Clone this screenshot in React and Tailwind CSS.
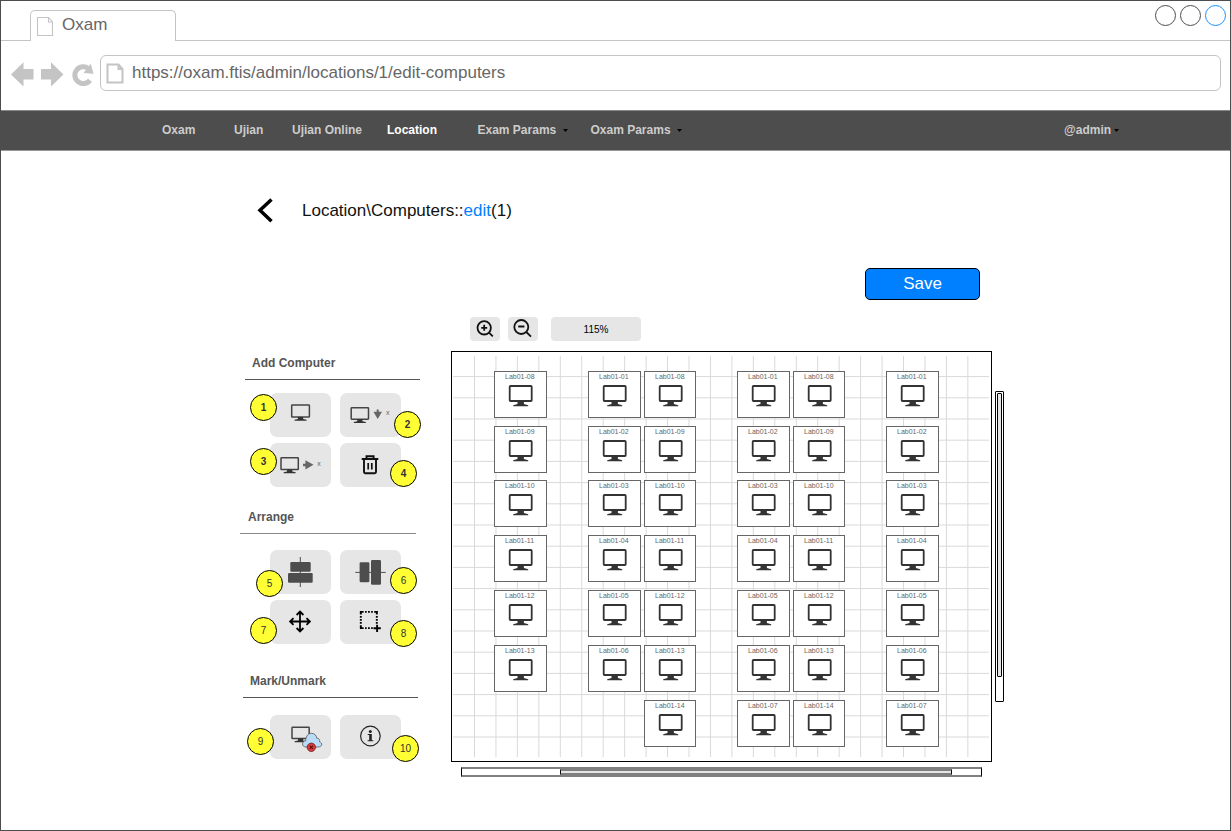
import React from "react";

function FileIcon({ className, strokeWidth }) {
  return (
    <svg className={className} viewBox="0 0 18 21" fill="none" stroke="#c4c4c4" strokeWidth={strokeWidth}>
      <path d="M1.5 1.5H12.5L16.5 6V19.5H1.5Z M12.5 1.5V6H16.5" />
    </svg>
  );
}

function BrowserChrome() {
  return (
    <header>
      <div className="flex h-10 items-end">
        <div className="h-px w-[29px] bg-[#c4c4c4]" />
        <div className="flex h-[31px] w-[146px] items-center rounded-t-[5px] border border-b-0 border-[#c4c4c4] pl-[5px]">
          <FileIcon className="h-[21px] w-[18px]" strokeWidth={1.1} />
          <span className="ml-[8px] text-[17px] leading-none text-[#666] -mt-[3px]">Oxam</span>
        </div>
        <div className="flex h-full flex-1 items-start justify-end gap-[4px] border-b border-[#c4c4c4] pr-1 pt-1">
          <span className="h-[21px] w-[21px] rounded-full border border-[#4d4d4d]" />
          <span className="h-[21px] w-[21px] rounded-full border border-[#4d4d4d]" />
          <span className="h-[21px] w-[21px] rounded-full border border-[#1e90ff]" />
        </div>
      </div>
      <div className="flex h-[69px] pl-2.5 pt-[14px] pr-[9px]">
        <svg className="mt-[7px] h-6 w-[84px] shrink-0" viewBox="0 0 84 24" fill="#c4c4c4">
          <path d="M0 12.5L12.5 .3V7H22.5V17.5H12.5V24.5Z" />
          <path d="M52.5 12.5L40 .3V7H30V17.5H40V24.5Z" />
          <path d="M79 18.2A8.4 8.4 0 1 1 77.5 6.6" fill="none" stroke="#c4c4c4" strokeWidth="5" />
          <path d="M79.7 1.8L82.6 11.8L72.5 11Z" />
        </svg>
        <div className="flex h-9 flex-1 items-center rounded-md border border-[#c4c4c4] pl-[5px] ml-[5px]">
          <FileIcon className="h-[21px] w-[18px]" strokeWidth={2} />
          <span className="-mt-px ml-[8px] text-[17px] leading-none text-[#666]">https://oxam.ftis/admin/locations/1/edit-computers</span>
        </div>
      </div>
    </header>
  );
}

function Caret() {
  return (
    <svg className="mt-0.5 h-[3px] w-[5px]" viewBox="0 0 5 3">
      <path d="M0 0H5L2.5 3Z" fill="#000" />
    </svg>
  );
}

function NavBar() {
  return (
    <nav className="flex h-[41px] items-center border-y border-t-[#888] border-b-[#999] bg-[#4d4d4d] pb-0.5 pl-[161px] text-xs font-bold text-[#ccc]">
      <span className="w-[72px]">Oxam</span>
      <span className="w-[58px]">Ujian</span>
      <span className="w-[95px]">Ujian Online</span>
      <span className="w-[90.5px] text-white">Location</span>
      <span className="flex w-[113px] items-center gap-[7px]">Exam Params <Caret /></span>
      <span className="flex w-[473.5px] items-center gap-[6px]">Oxam Params <Caret /></span>
      <span className="flex items-center gap-[3px]">@admin <Caret /></span>
    </nav>
  );
}

function Screen({ x, y, w = 18.5, h = 12.5 }) {
  const cx = x + w / 2;
  const b = y + h;
  return (
    <g>
      <rect x={x} y={y} width={w} height={h} rx=".6" fill="none" stroke="#444" strokeWidth="1.5" />
      <path
        d={`M${cx - 2.6} ${b}H${cx + 2.6}V${b + 2}L${cx + 6} ${b + 2.8}V${b + 3.7}H${cx - 6}V${b + 2.8}L${cx - 2.6} ${b + 2}Z`}
        fill="#333"
      />
    </g>
  );
}

function Tool({ label, badge, bold, children }) {
  return (
    <button aria-label={label} className="relative h-11 w-[61px] rounded-[7px] bg-[#e6e6e6]">
      <svg className="h-11 w-[61px]" viewBox="0 0 61 44">{children}</svg>
      <span className={`absolute flex h-[27px] w-[27px] items-center justify-center rounded-full border-[1.5px] border-black bg-[#ffff33] text-[10px] leading-none text-[#333] ${bold ? "font-bold" : ""} ${badge.pos}`}>
        {badge.n}
      </span>
    </button>
  );
}

function Section({ title, head, titlePad, line, children }) {
  return (
    <section>
      <div className={`border-b ${line} ${head}`}>
        <h2 className={`text-xs font-bold leading-4 text-[#555] ${titlePad}`}>{title}</h2>
      </div>
      {children}
    </section>
  );
}

const toolGrid = "grid w-[131px] grid-cols-[61px_61px] gap-x-[9px] gap-y-[6px] ml-[30px]";

function Sidebar() {
  return (
    <aside className="w-[211px] shrink-0 pt-[38px]">
      <Section title="Add Computer" head="ml-[5px] h-[25px] w-[175px]" titlePad="pl-[7px]" line="border-[#555]">
        <div className={`mt-[13px] ${toolGrid}`}>
          <Tool label="Add computer" bold badge={{ n: 1, pos: "-left-5 top-[1px]" }}>
            <Screen x={21.7} y={12} w={17.7} h={12} />
          </Tool>
          <Tool label="Add computers down" bold badge={{ n: 2, pos: "left-[54px] top-[18px]" }}>
            <Screen x={11.2} y={14.7} w={17.3} h={11.5} />
            <path d="M36.7 16.5H38.7V18.8H42L37.7 26L33.4 18.8H36.7Z" fill="#666" />
            <text x="46" y="22" fontSize="7" fill="#666">x</text>
          </Tool>
          <Tool label="Add computers right" bold badge={{ n: 3, pos: "-left-5 top-[5px]" }}>
            <Screen x={11} y={14.7} w={17.3} h={11.8} />
            <path d="M33 20.8H35.4V17.3L43.5 21.8L35.4 26.5V23.2H33Z" fill="#666" />
            <text x="47.3" y="23" fontSize="7" fill="#666">x</text>
          </Tool>
          <Tool label="Delete" bold badge={{ n: 4, pos: "left-[50px] top-[17px]" }}>
            <g fill="none" stroke="#111" strokeWidth="1.9">
              <path d="M21.7 16H38.3M26.5 16V13.2H33.6V16M24 16V29Q24 30.2 25.2 30.2H34.8Q36 30.2 36 29V16" />
              <path d="M28.2 20V26.5M31.8 20V26.5" strokeWidth="1.7" />
            </g>
          </Tool>
        </div>
      </Section>
      <Section title="Arrange" head="mt-[22px] h-[25px] w-[176px]" titlePad="pl-[8px]" line="border-[#888]">
        <div className={`mt-[16px] ${toolGrid}`}>
          <Tool label="Center vertically" badge={{ n: 5, pos: "-left-[14px] top-5" }}>
            <path d="M30.3 7V37" stroke="#4d4d4d" />
            <rect x="20.3" y="12" width="20.4" height="9.8" rx="1.3" fill="#4d4d4d" />
            <rect x="18" y="23" width="24.7" height="9.8" rx="1.3" fill="#4d4d4d" />
          </Tool>
          <Tool label="Center horizontally" badge={{ n: 6, pos: "left-[50px] top-[17px]" }}>
            <path d="M15.3 22.4H45.7" stroke="#4d4d4d" />
            <rect x="19.6" y="12.3" width="9.8" height="20" rx="1.3" fill="#4d4d4d" />
            <rect x="31" y="10" width="10" height="24.7" rx="1.3" fill="#4d4d4d" />
          </Tool>
          <Tool label="Move" badge={{ n: 7, pos: "-left-5 top-[17px]" }}>
            <path
              d="M30 11.7V31.3M20.2 21.5H39.8M26.6 15L30 11.6L33.4 15M26.6 28L30 31.4L33.4 28M23.5 18.1L20.1 21.5L23.5 24.9M36.5 18.1L39.9 21.5L36.5 24.9"
              fill="none" stroke="#000" strokeWidth="1.8"
            />
          </Tool>
          <Tool label="Select area" badge={{ n: 8, pos: "left-[50px] top-5" }}>
            <g fill="none" stroke="#000" strokeWidth="1.9">
              <path d="M20 11.9H37.8" strokeDasharray="3.6 1.4 1.7 1.3 1.8 1.3 1.7 1.4 3.6 1" />
              <path d="M20.8 11V29M36.8 11V24" strokeDasharray="3.6 1.4 1.7 1.3 1.8 1.3 1.7 1.4 3.6 1" />
              <path d="M20 28.1H34" strokeDasharray="3.6 1.4 1.7 1.3 1.8 1.3 1.7 1.4" />
              <path d="M37.1 24.7V32M33.5 28.2H40.8" />
            </g>
          </Tool>
        </div>
      </Section>
      <Section title="Mark/Unmark" head="ml-[3px] mt-[29px] h-[25px] w-[175px]" titlePad="pl-[7px]" line="border-[#555]">
        <div className={`mt-[17px] ${toolGrid}`}>
          <Tool label="Mark computer offline" badge={{ n: 9, pos: "-left-[23px] top-[13px]" }}>
            <Screen x={22} y={12.2} w={17.2} h={11.3} />
            <path
              d="M36 32C31.3 32 31.5 26 35.8 25.8C35.5 22.5 37.5 18.3 41.3 18.3C44.7 18.3 46.5 20.6 46.8 23.3C49.7 23 50 26 49.4 26.8C53.3 28 52 32 48.5 32Z"
              fill="#bbdcf7" stroke="#555" strokeWidth=".8"
            />
            <circle cx="41.3" cy="32.3" r="4.2" fill="#e03a3a" stroke="#622" strokeWidth=".8" />
            <path d="M39.7 30.7L42.9 33.9M42.9 30.7L39.7 33.9" stroke="#511" strokeWidth="1.1" />
          </Tool>
          <Tool label="Info" badge={{ n: 10, pos: "left-[52px] top-5" }}>
            <circle cx="30.4" cy="21" r="9.8" fill="none" stroke="#222" strokeWidth="1.2" />
            <circle cx="30.3" cy="16.6" r="1.5" fill="#222" />
            <path d="M27.7 19.1H31.8V25.3H33.3V26.3H27.6V25.3H29.2V20.1H27.7Z" fill="#222" />
          </Tool>
        </div>
      </Section>
    </aside>
  );
}

const COLUMNS = [
  { x: 42, width: 53, from: 8, to: 13 },
  { x: 136, width: 53, from: 1, to: 6 },
  { x: 192, width: 52, from: 8, to: 14 },
  { x: 285, width: 53, from: 1, to: 7 },
  { x: 341, width: 52, from: 8, to: 14 },
  { x: 434, width: 53, from: 1, to: 7 },
];

function ComputerNode({ x, y, width, name }) {
  return (
    <div
      className="absolute flex h-[47px] flex-col items-start border border-[#666] bg-white"
      style={{ left: x, top: y, width }}
    >
      <span className="mt-px ml-[10px] text-[7px] leading-[8px] text-[#666]">{name}</span>
      <svg className="ml-[13px] mt-[4px] h-[22px] w-[25px]" viewBox="0 0 25 22">
        <rect x="1.7" y="1" width="22" height="15" rx=".8" fill="#fff" stroke="#333" strokeWidth="1.8" />
        <path d="M9.5 16H15.9V19L20.2 20.2V21.2H5.2V20.2L9.5 19Z" fill="#333" />
      </svg>
    </div>
  );
}

function Canvas() {
  const verticals = Array.from({ length: 24 }, (_, i) => 22.5 + i * 21.45);
  const horizontals = Array.from({ length: 18 }, (_, i) => 24.6 + i * 21.2);
  return (
    <div className="relative h-[411px] w-[541px] border border-black">
      <svg className="h-full w-full" viewBox="0 0 539 409" stroke="#d9d9d9">
        {verticals.map((x) => <path key={x} d={`M${x} 4V405`} />)}
        {horizontals.map((y) => <path key={y} d={`M1 ${y}H537`} />)}
      </svg>
      {COLUMNS.map((c) =>
        Array.from({ length: c.to - c.from + 1 }, (_, i) => (
          <ComputerNode
            key={`${c.x}-${i}`}
            x={c.x}
            y={Math.round(18.75 + i * 54.8)}
            width={c.width}
            name={`Lab01-${String(c.from + i).padStart(2, "0")}`}
          />
        ))
      )}
    </div>
  );
}

function Workspace() {
  return (
    <div>
      <div className="ml-[19px] flex h-6 gap-2">
        <button aria-label="Zoom in" className="w-[30px] rounded-[4px] bg-[#e6e6e6]">
          <svg className="h-6 w-[30px]" viewBox="0 0 30 24" fill="none" stroke="#111" strokeWidth="1.8">
            <circle cx="14.2" cy="10.8" r="6.7" />
            <path d="M19 15.6L22.8 19.4M11.2 10.8H17.2M14.2 7.8V13.8" />
          </svg>
        </button>
        <button aria-label="Zoom out" className="w-[30px] rounded-[4px] bg-[#e6e6e6]">
          <svg className="h-6 w-[30px]" viewBox="0 0 30 24" fill="none" stroke="#111" strokeWidth="1.8">
            <circle cx="13.3" cy="10" r="7" />
            <path d="M18.3 15L23 19.6M10.2 9.5H16.4" />
          </svg>
        </button>
        <div className="ml-[5px] flex w-[90px] items-center justify-center rounded-[4px] bg-[#e6e6e6] text-[10px] text-black">115%</div>
      </div>
      <div className="mt-2.5 flex">
        <Canvas />
        <div className="ml-[3px] mt-10 h-[311px] w-[9px] rounded-[1px] border border-black p-px">
          <div className="h-[284px] w-[5px] rounded-[1px] border border-black bg-[#e6e6e6]" />
        </div>
      </div>
      <div className="ml-2.5 mt-[5px] h-[10px] w-[521px] border-x border-y-2 border-x-black border-y-[#808080] pl-[98px]">
        <div className="h-[6px] w-[392px] border-x border-y-2 border-x-black border-y-[#808080] bg-[#e6e6e6]" />
      </div>
    </div>
  );
}

export default function App() {
  return (
    <div
      className="h-[831px] w-[1231px] overflow-hidden border border-[#4d4d4d] bg-white"
      style={{ fontFamily: '"Liberation Sans", Arial, sans-serif' }}
    >
      <BrowserChrome />
      <NavBar />
      <main>
        <div className="flex h-[117px] items-start pl-[256px] pt-[46px]">
          <svg className="h-[27px] w-[18px]" viewBox="0 0 18 27" fill="none" stroke="#000" strokeWidth="3.5">
            <path d="M14.5 2.5L3 13.3L14.5 24.2" />
          </svg>
          <h1 className="ml-[27px] mt-[4px] text-[17px] leading-5 text-[#111]">
            Location\Computers::<a className="text-[#0080ff]">edit</a>(1)
          </h1>
        </div>
        <div className="flex h-[49px] w-[979px] justify-end">
          <button className="h-8 w-[115px] rounded-[5px] border border-black bg-[#0080ff] pb-0.5 text-[17px] leading-none text-white">Save</button>
        </div>
        <div className="flex pl-[239px]">
          <Sidebar />
          <Workspace />
        </div>
      </main>
    </div>
  );
}
